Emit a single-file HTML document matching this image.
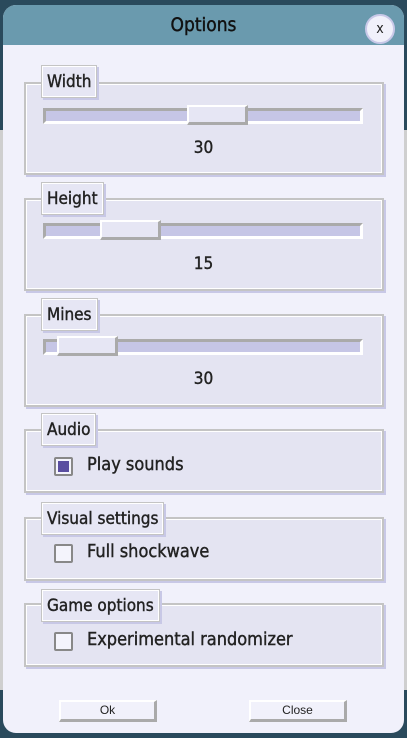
<!DOCTYPE html><html><head><style>
*{box-sizing:border-box;margin:0;padding:0}
body{width:407px;height:738px;background:#2a4a5c;position:relative;overflow:hidden;font-family:"DejaVu Sans Condensed","DejaVu Sans","Liberation Sans",sans-serif;color:#222}
.bgside{position:absolute;top:130px;left:0;width:407px;height:560px;background:#cfcfcf}
.dlg{position:absolute;left:3px;top:5px;width:401px;height:728px;background:#f1f1fb;border-radius:13px;overflow:hidden}
.title{height:40px;background:#6a9aae;text-align:center;font-size:19px;line-height:40px;color:#111;-webkit-text-stroke:0.4px #111}
.x{position:absolute;left:362px;top:9px;width:30px;height:30px;border-radius:50%;background:#f1f1fb;border:2px solid #c8c8e8;font-size:14px;line-height:26px;text-align:center}
.g{position:absolute;left:21px;width:360px;background:#e4e4f2;border:2px solid #c4c4c4;box-shadow:2px 2px 0 #c8c8e6}
.g{outline:1px solid #fff;outline-offset:-3px}
.lab{position:absolute;left:38px;background:#e6e6f4;border:1px solid #c4c4c4;box-shadow:inset 0 0 0 1px #fff,2px 2px 0 #c8c8e6;font-size:17px;padding:0 5px;height:33px;line-height:32px;-webkit-text-stroke:0.4px #222}
.tr{position:absolute;left:40px;width:320px;height:16px;background:#c6c6e6;border-top:3px solid #aaa;border-left:3px solid #aaa;border-bottom:3px solid #fff;border-right:3px solid #fff}
.th{position:absolute;height:20px;width:61px;background:#e6e6f4;border-top:2px solid #fff;border-left:2px solid #fff;border-bottom:3px solid #aaa;border-right:3px solid #aaa}
.v{position:absolute;left:0;width:401px;text-align:center;font-size:17px;-webkit-text-stroke:0.4px #222}
.cb{position:absolute;left:51px;width:19px;height:19px;border:2px solid #888;border-radius:2px;background:#f4f4fc}
.cb.on::after{content:"";position:absolute;left:2px;top:2px;width:11px;height:11px;background:#5a4ea0}
.ct{position:absolute;left:84px;font-size:18px;-webkit-text-stroke:0.4px #222}
.btn{position:absolute;top:695px;width:98px;height:22px;background:#f1f1fb;border-top:2px solid #fff;border-left:2px solid #fff;border-bottom:3px solid #aaa;border-right:3px solid #aaa;font-family:"Liberation Sans",sans-serif;font-size:12px;text-align:center;line-height:17px}
</style></head><body>
<div class="bgside"></div>
<div class="dlg">
<div class="title">Options</div><div class="x">x</div>
<div class="g" style="top:77px;height:93px"></div><div class="lab" style="top:60px">Width</div>
<div class="tr" style="top:103px"></div><div class="th" style="left:184px;top:100px"></div><div class="v" style="top:133px">30</div>
<div class="g" style="top:193px;height:93px"></div><div class="lab" style="top:177px">Height</div>
<div class="tr" style="top:218px"></div><div class="th" style="left:97px;top:215px"></div><div class="v" style="top:249px">15</div>
<div class="g" style="top:309px;height:93px"></div><div class="lab" style="top:293px">Mines</div>
<div class="tr" style="top:334px"></div><div class="th" style="left:54px;top:331px"></div><div class="v" style="top:364px">30</div>
<div class="g" style="top:424px;height:64px"></div><div class="lab" style="top:408px">Audio</div>
<div class="cb on" style="top:452px"></div><div class="ct" style="top:449px">Play sounds</div>
<div class="g" style="top:512px;height:64px"></div><div class="lab" style="top:497px">Visual settings</div>
<div class="cb" style="top:539px"></div><div class="ct" style="top:536px">Full shockwave</div>
<div class="g" style="top:598px;height:64px"></div><div class="lab" style="top:584px">Game options</div>
<div class="cb" style="top:627px"></div><div class="ct" style="top:624px">Experimental randomizer</div>
<div class="btn" style="left:56px">Ok</div><div class="btn" style="left:246px">Close</div>
</div>
</body></html>
